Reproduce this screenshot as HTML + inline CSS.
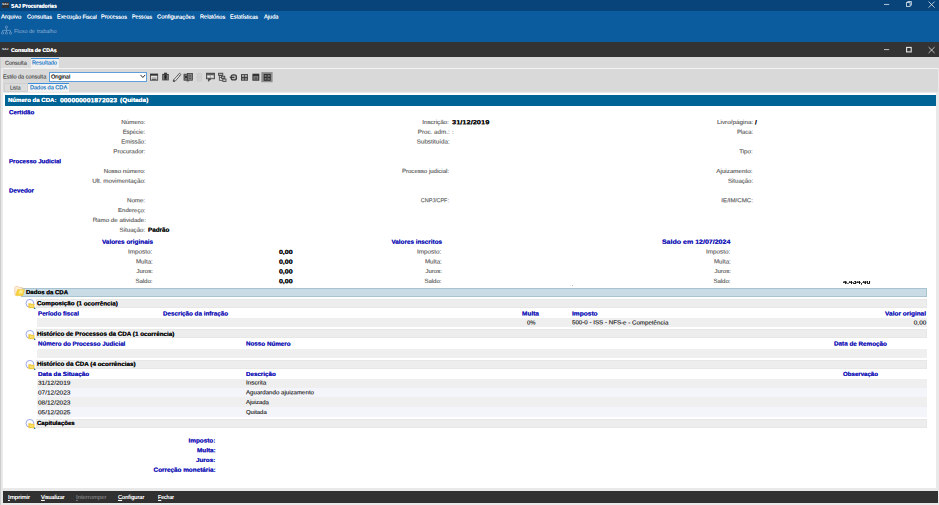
<!DOCTYPE html>
<html><head><meta charset="utf-8"><title>SAJ Procuradorias</title>
<style>
html,body{margin:0;padding:0;}
body{width:939px;height:505px;overflow:hidden;background:#fff;font-family:"Liberation Sans",sans-serif;}
#root{position:relative;width:939px;height:505px;overflow:hidden;background:#fff;}
.b{position:absolute;}
.t{text-shadow:0 0 0.35px currentColor;position:absolute;white-space:nowrap;line-height:8px;height:8px;font-size:5.8px;color:#6a6a6a;}
.t u{text-decoration:underline;text-decoration-thickness:0.5px;text-underline-offset:0.6px;}
.w{color:#fff;text-shadow:0 0 0.15px currentColor;}
.wb{color:#fff;font-weight:bold;}
.fl{color:#8db0d3;text-shadow:none;}
.tg{color:#5c5c5c;text-shadow:0 0 0.15px currentColor;}
.tb{color:#2f7fc8;text-shadow:0 0 0.15px currentColor;}
.k{color:#222;}
.kb{color:#111;font-weight:bold;text-shadow:0 0 0.25px currentColor;}
.sb{color:#2222b8;font-weight:bold;text-shadow:0 0 0.25px currentColor;}
.g{color:#767676;text-shadow:0 0 0.2px currentColor;}
.d{color:#444;}
.dis{color:#777;}

</style></head>
<body>
<div id="root">
<!-- chrome -->
<div class="b" style="left:0;top:0;width:939px;height:11.4px;background:#08437a"></div>
<div class="b" style="left:0;top:11.4px;width:939px;height:30.5px;background:#0b5b9f"></div>
<div class="b" style="left:0;top:41.9px;width:939px;height:15.1px;background:#333"></div>
<!-- tab strip -->
<div class="b" style="left:0;top:57px;width:939px;height:448px;background:#e9e9e9"></div>
<div class="b" style="left:0;top:57px;width:939px;height:10.7px;background:#dadada"></div>
<div class="b" style="left:30.7px;top:57.6px;width:28.7px;height:10px;background:#efefef;border-top:0.8px solid #3d8edb;box-sizing:border-box"></div>
<div class="b" style="left:2.5px;top:67.6px;width:935px;height:1.1px;background:#f4f4f4"></div>
<!-- toolbar panel -->
<div class="b" style="left:2.5px;top:68.7px;width:935px;height:23.8px;background:#d9d9d9"></div>
<div class="b" style="left:49.1px;top:72.2px;width:98.2px;height:10px;background:#fff;border:0.8px solid #5fa0dc;box-sizing:border-box"></div>
<!-- subtabs -->
<div class="b" style="left:3.5px;top:83.2px;width:24.2px;height:8.6px;background:#dcdcdc;border:0.5px solid #cfcfcf;box-sizing:border-box"></div>
<div class="b" style="left:28.4px;top:82.8px;width:40.6px;height:9.6px;background:#f2f2f2;border-top:0.8px solid #3d8edb;box-sizing:border-box"></div>
<!-- content white -->
<div class="b" style="left:3px;top:92.5px;width:933.4px;height:395.7px;background:#fff"></div>
<div class="b" style="left:5px;top:94.5px;width:931.3px;height:11.1px;background:#006396"></div>
<!-- tree bars -->
<div class="b" style="left:21px;top:287.7px;width:906.2px;height:8.9px;background:#c9dce6;border:0.5px solid #aac3d0;box-sizing:border-box"></div>
<div class="b" style="left:35.8px;top:298.9px;width:891.4px;height:8.9px;background:#ededed;box-shadow:inset 0 0 0 0.5px #e2e2e2"></div>
<div class="b" style="left:36.5px;top:318.2px;width:890.7px;height:9px;background:#efefef"></div>
<div class="b" style="left:35.8px;top:329.4px;width:891.4px;height:8.8px;background:#ededed;box-shadow:inset 0 0 0 0.5px #e2e2e2"></div>
<div class="b" style="left:36.5px;top:348.6px;width:890.7px;height:9px;background:#efefef"></div>
<div class="b" style="left:35.8px;top:360px;width:891.4px;height:8.7px;background:#ededed;box-shadow:inset 0 0 0 0.5px #e2e2e2"></div>
<div class="b" style="left:36.5px;top:378.6px;width:890.7px;height:9px;background:#efefef"></div>
<div class="b" style="left:36.5px;top:387.6px;width:890.7px;height:9.7px;background:#f4f5fb"></div>
<div class="b" style="left:36.5px;top:397.3px;width:890.7px;height:10px;background:#efefef"></div>
<div class="b" style="left:36.5px;top:407.3px;width:890.7px;height:10px;background:#f4f5fb"></div>
<div class="b" style="left:35.8px;top:419px;width:891.4px;height:8.6px;background:#ededed;box-shadow:inset 0 0 0 0.5px #e2e2e2"></div>
<!-- bottom -->
<div class="b" style="left:3px;top:490.8px;width:935px;height:11.8px;background:#313131"></div>

<div class="b" style="left:0;top:57px;width:0.9px;height:448px;background:#cdcdcd"></div>
<!-- clipped partial value -->
<div class="b" style="left:840px;top:281.4px;width:36px;height:4px;overflow:hidden"><span class="t kb" style="left:3.2px;top:-3.6px;font-size:6px;transform-origin:0 50%;transform:scaleX(1.17)">4.434,40</span></div>
<div class="b" style="left:572.2px;top:284.6px;width:0.8px;height:0.8px;background:#999;border-radius:50%"></div>

<!-- window controls row 1 -->
<svg class="b" style="left:880px;top:0;width:59px;height:11px" viewBox="880 0 59 11">
 <g stroke="#fff" fill="none" stroke-width="0.8" opacity="0.88">
  <line x1="884" y1="4.45" x2="889.2" y2="4.45"/>
  <rect x="906.4" y="2.6" width="3.7" height="3.8"/>
  <path d="M907.7 2.6V1.5H911.4V5.2H910.1"/>
  <path d="M928.6 1.6L934.6 7.6M934.6 1.6L928.6 7.6"/>
 </g>
</svg>
<!-- window controls row 2 -->
<svg class="b" style="left:880px;top:44px;width:59px;height:12px" viewBox="880 44 59 12">
 <g stroke="#fff" fill="none" stroke-width="0.8" opacity="0.88">
  <line x1="884" y1="49.6" x2="889.2" y2="49.6"/>
  <rect x="906.6" y="47.4" width="4.6" height="4.5" stroke-width="1.1"/>
  <path d="M928.6 47.1L934.6 53M934.6 47.1L928.6 53"/>
 </g>
</svg>
<!-- SAJ icons -->
<div class="b" style="left:1.7px;top:1.6px;width:6.9px;height:6.5px;background:#2f3338"></div>
<span class="t" style="left:2.3px;top:2.1px;font-size:2.9px;line-height:4px;height:4px;color:#f2f2f2;font-weight:bold;text-shadow:none;transform-origin:0 50%;transform:scaleX(1.12) rotate(0.1deg)">SAJ</span>
<span class="t" style="left:2.2px;top:46.8px;font-size:2.9px;line-height:4px;height:4px;color:#f2f2f2;font-weight:bold;text-shadow:none;transform-origin:0 50%;transform:scaleX(1.15) rotate(0.1deg)">SAJ</span>
<!-- fluxo icon -->
<svg class="b" style="left:1px;top:25px;width:12px;height:11px" viewBox="1 25 12 11">
 <g stroke="#8db0d3" fill="none" stroke-width="0.6">
  <circle cx="6.4" cy="27.1" r="1.1"/>
  <path d="M6.4 28.2V32M2.6 32V30.4H10.5V32"/>
  <circle cx="2.6" cy="33.1" r="1.1"/><circle cx="6.4" cy="33.1" r="1.1"/><circle cx="10.5" cy="33.1" r="1.1"/>
 </g>
</svg>
<!-- combo chevron -->
<svg class="b" style="left:139px;top:73px;width:8px;height:8px" viewBox="139 73 8 8">
 <path d="M140.5 74.9L142.85 77.5L145.2 74.9" stroke="#222" stroke-width="0.95" fill="none"/>
</svg>
<!-- toolbar icons -->
<svg class="b" style="left:148px;top:71px;width:127px;height:13px;filter:blur(0.25px)" viewBox="148 71 127 13">
 <!-- 1 window -->
 <g>
  <rect x="150.5" y="74" width="7.2" height="6.2" fill="#e4e4e4" stroke="#333" stroke-width="0.8"/>
  <rect x="150.5" y="74" width="7.2" height="1.7" fill="#333"/>
  <rect x="151.7" y="77" width="4.8" height="1.6" fill="#b8b8b8"/>
  <rect x="151.7" y="78.8" width="4.8" height="1" fill="#444"/>
 </g>
 <!-- 2 clipboard -->
 <g>
  <rect x="162.2" y="73.9" width="6.6" height="6.5" fill="#424242"/>
  <rect x="164" y="72.7" width="3" height="1.8" fill="#3a3a3a"/>
  <rect x="163.1" y="75" width="1.1" height="4.6" fill="#7d7d7d"/>
  <rect x="166.8" y="75" width="1.1" height="4.6" fill="#7d7d7d"/>
  <ellipse cx="165.5" cy="77" rx="0.7" ry="1.8" fill="#141414"/>
 </g>
 <!-- 3 pencil -->
 <g>
  <path d="M173.4 80.2L179.6 73.2L181 74.5L175 81.4Z" fill="#e8e8e8" stroke="#3c3c3c" stroke-width="0.8"/>
  <path d="M173 81.6L173.5 79.9L175 81.2Z" fill="#333" stroke="#333" stroke-width="0.4"/>
  <path d="M178.4 74.6L179.8 75.9" stroke="#3c3c3c" stroke-width="0.6"/>
 </g>
 <!-- 4 -->
 <g>
  <rect x="184" y="74.2" width="5" height="6" fill="#7a7a7a" stroke="#3e3e3e" stroke-width="0.8"/>
  <rect x="187.4" y="73.4" width="5" height="6.8" fill="#8c8c8c" stroke="#3e3e3e" stroke-width="0.8"/>
  <path d="M184.8 75.8L187 78.2M187 75.8L184.8 78.2" stroke="#1c1c1c" stroke-width="0.8"/>
  <rect x="188.4" y="74.8" width="3" height="0.8" fill="#4a4a4a"/><rect x="188.4" y="76.5" width="3" height="0.8" fill="#4a4a4a"/><rect x="188.4" y="78.2" width="3" height="0.8" fill="#4a4a4a"/>
  <rect x="186.6" y="80.2" width="2" height="1.3" fill="#555"/>
 </g>
 <!-- 5 disabled -->
 <g stroke="#c4c4c4" fill="#d2d2d2" stroke-width="0.5">
  <rect x="197.1" y="73.4" width="4.4" height="3.6"/><rect x="197.1" y="77.4" width="4.4" height="3.6"/>
 </g>
 <!-- 6 comment -->
 <g>
  <rect x="206.5" y="73.2" width="8" height="5.6" fill="#a8a8a8" stroke="#3c3c3c" stroke-width="0.8"/>
  <rect x="206.5" y="73.2" width="8" height="1.6" fill="#4a4a4a"/>
  <rect x="207.6" y="75.8" width="2.2" height="1.6" fill="#ededed"/><rect x="211" y="75.8" width="2.4" height="1.6" fill="#ededed"/>
  <path d="M208.4 78.8V81.4L211 78.8Z" fill="#3c3c3c" stroke="#3c3c3c" stroke-width="0.5"/>
 </g>
 <!-- 7 tree -->
 <g stroke="#3a3a3a" stroke-width="0.8" fill="#a8a8a8">
  <rect x="218.6" y="73.2" width="4.2" height="2.3"/>
  <path d="M219.4 75.5V80.4H222.8M219.4 77.4H221.6" fill="none"/>
  <rect x="221.6" y="76.2" width="3.2" height="2.2"/>
  <rect x="222.8" y="79" width="3.2" height="2.4" fill="#c8c8c8"/>
 </g>
 <!-- 8 link -->
 <g fill="none" stroke="#3c3c3c">
  <rect x="231.2" y="74.9" width="5.2" height="5" rx="2" fill="#bdbdbd" stroke-width="1.3"/>
  <path d="M229.8 77.4H234.4" stroke-width="1.2"/>
 </g>
 <!-- 9 -->
 <g>
  <rect x="241" y="74.1" width="7" height="6.6" fill="#424242"/>
  <rect x="242" y="75.2" width="2.2" height="1.5" fill="#c8c8c8"/><rect x="245" y="75.2" width="2.2" height="1.5" fill="#c8c8c8"/>
  <rect x="242" y="78.3" width="2.2" height="1.4" fill="#a0a0a0"/><rect x="245" y="78.3" width="2.2" height="1.4" fill="#a0a0a0"/>
 </g>
 <!-- 10 -->
 <g>
  <rect x="252.4" y="73.7" width="6.9" height="7" fill="#343434"/>
  <rect x="253.5" y="76.2" width="4.7" height="3.5" fill="#8a8a8a"/>
  <rect x="254.6" y="77.2" width="2.6" height="2.5" fill="#555"/>
 </g>
 <!-- 11 selected -->
 <g>
  <rect x="261.3" y="72.1" width="11.3" height="10.1" fill="#8e8e8e"/>
  <rect x="263.7" y="73.9" width="7" height="6.9" fill="#2e2e2e"/>
  <rect x="264.7" y="75.1" width="1.7" height="1.6" fill="#8e8e8e"/><rect x="268" y="75.1" width="1.7" height="1.6" fill="#8e8e8e"/>
  <rect x="264.7" y="78.1" width="1.7" height="1.6" fill="#808080"/><rect x="268" y="78.1" width="1.7" height="1.6" fill="#808080"/>
  <rect x="266.8" y="74.4" width="0.8" height="6" fill="#606060"/>
 </g>
</svg>
<!-- folder icon -->
<svg class="b" style="left:13px;top:285px;width:13px;height:12px;filter:blur(0.25px)" viewBox="13 285 13 12">
 <path d="M14.8 287.4L15.6 286.5H18.2L19 287.6H22.4V294.6H14.8Z" fill="#fdf1dc" stroke="#f0b78c" stroke-width="0.6"/>
 <path d="M17.4 289.4H24.6L23 295.7H15.6Z" fill="#f5d23e" stroke="#ecc040" stroke-width="0.4"/>
 <path d="M19.6 290.2H23L22.2 293.6H18.8Z" fill="#fdf2a8" opacity="0.85"/>
</svg>

<svg class="b" style="left:24px;top:297.0px;width:13px;height:13px" viewBox="24 297 13 13">
 <circle cx="29.9" cy="303.3" r="3.9" fill="#fdfdff" stroke="#9ca8ea" stroke-width="1"/>
 <path d="M28.6 303.4H30.6L31.2 304H34.2V307.9H28.6Z" fill="#f4cf3c" stroke="#e9b848" stroke-width="0.4"/>
 <path d="M29.6 304.8H33.4V306.8H29.6Z" fill="#fbe98a" opacity="0.7"/>
 <circle cx="34.7" cy="308.3" r="0.8" fill="#176a7a"/>
</svg>
<svg class="b" style="left:24px;top:327.5px;width:13px;height:13px" viewBox="24 297 13 13">
 <circle cx="29.9" cy="303.3" r="3.9" fill="#fdfdff" stroke="#9ca8ea" stroke-width="1"/>
 <path d="M28.6 303.4H30.6L31.2 304H34.2V307.9H28.6Z" fill="#f4cf3c" stroke="#e9b848" stroke-width="0.4"/>
 <path d="M29.6 304.8H33.4V306.8H29.6Z" fill="#fbe98a" opacity="0.7"/>
 <circle cx="34.7" cy="308.3" r="0.8" fill="#176a7a"/>
</svg>
<svg class="b" style="left:24px;top:357.8px;width:13px;height:13px" viewBox="24 297 13 13">
 <circle cx="29.9" cy="303.3" r="3.9" fill="#fdfdff" stroke="#9ca8ea" stroke-width="1"/>
 <path d="M28.6 303.4H30.6L31.2 304H34.2V307.9H28.6Z" fill="#f4cf3c" stroke="#e9b848" stroke-width="0.4"/>
 <path d="M29.6 304.8H33.4V306.8H29.6Z" fill="#fbe98a" opacity="0.7"/>
 <circle cx="34.7" cy="308.3" r="0.8" fill="#176a7a"/>
</svg>
<svg class="b" style="left:24px;top:416.9px;width:13px;height:13px" viewBox="24 297 13 13">
 <circle cx="29.9" cy="303.3" r="3.9" fill="#fdfdff" stroke="#9ca8ea" stroke-width="1"/>
 <path d="M28.6 303.4H30.6L31.2 304H34.2V307.9H28.6Z" fill="#f4cf3c" stroke="#e9b848" stroke-width="0.4"/>
 <path d="M29.6 304.8H33.4V306.8H29.6Z" fill="#fbe98a" opacity="0.7"/>
 <circle cx="34.7" cy="308.3" r="0.8" fill="#176a7a"/>
</svg>
<span id="t0" class="t wb" style="top:1px;font-size:5.5px;left:11.00px;transform-origin:0 50%;transform:translateY(0.70px) scaleX(0.923) rotate(0.1deg);">SAJ Procuradorias</span>
<span id="t1" class="t w" style="top:12px;font-size:5.7px;left:0.80px;transform-origin:0 50%;transform:translateY(0.60px) scaleX(1.047) rotate(0.1deg);">Arquivo</span>
<span id="t2" class="t w" style="top:12px;font-size:5.7px;left:26.60px;transform-origin:0 50%;transform:translateY(0.60px) scaleX(0.988) rotate(0.1deg);">Consultas</span>
<span id="t3" class="t w" style="top:12px;font-size:5.7px;left:56.70px;transform-origin:0 50%;transform:translateY(0.60px) scaleX(0.958) rotate(0.1deg);">Execução Fiscal</span>
<span id="t4" class="t w" style="top:12px;font-size:5.7px;left:101.00px;transform-origin:0 50%;transform:translateY(0.60px) scaleX(0.979) rotate(0.1deg);">Processos</span>
<span id="t5" class="t w" style="top:12px;font-size:5.7px;left:131.60px;transform-origin:0 50%;transform:translateY(0.60px) scaleX(0.925) rotate(0.1deg);">Pessoas</span>
<span id="t6" class="t w" style="top:12px;font-size:5.7px;left:156.90px;transform-origin:0 50%;transform:translateY(0.60px) scaleX(1.025) rotate(0.1deg);">Configurações</span>
<span id="t7" class="t w" style="top:12px;font-size:5.7px;left:199.60px;transform-origin:0 50%;transform:translateY(0.60px) scaleX(0.988) rotate(0.1deg);">Relatórios</span>
<span id="t8" class="t w" style="top:12px;font-size:5.7px;left:230.20px;transform-origin:0 50%;transform:translateY(0.60px) scaleX(0.966) rotate(0.1deg);">Estatísticas</span>
<span id="t9" class="t w" style="top:12px;font-size:5.7px;left:263.80px;transform-origin:0 50%;transform:translateY(0.60px) scaleX(0.997) rotate(0.1deg);">Ajuda</span>
<span id="t10" class="t fl" style="top:26px;font-size:5.7px;left:14.00px;transform-origin:0 50%;transform:translateY(0.90px) scaleX(0.971) rotate(0.1deg);">Fluxo de trabalho</span>
<span id="t11" class="t wb" style="top:46px;font-size:5.5px;left:11.00px;transform-origin:0 50%;transform:translateY(0.05px) scaleX(0.952) rotate(0.1deg);">Consulta de CDAs</span>
<span id="t12" class="t tg" style="top:58px;font-size:5.7px;left:4.90px;transform-origin:0 50%;transform:translateY(0.70px) scaleX(0.966) rotate(0.1deg);">Consulta</span>
<span id="t13" class="t tb" style="top:58px;font-size:5.7px;left:32.20px;transform-origin:0 50%;transform:translateY(0.40px) scaleX(0.972) rotate(0.1deg);">Resultado</span>
<span id="t14" class="t tg" style="top:72px;font-size:5.7px;left:2.80px;transform-origin:0 50%;transform:translateY(0.50px) scaleX(0.969) rotate(0.1deg);">Estilo da consulta</span>
<span id="t15" class="t k" style="top:72px;font-size:5.7px;left:50.70px;transform-origin:0 50%;transform:translateY(0.50px) scaleX(0.979) rotate(0.1deg);">Original</span>
<span id="t16" class="t tg" style="top:83px;font-size:5.7px;left:10.00px;transform-origin:0 50%;transform:translateY(0.50px) scaleX(0.866) rotate(0.1deg);">Lista</span>
<span id="t17" class="t tb" style="top:83px;font-size:5.7px;left:30.00px;transform-origin:0 50%;transform:translateY(0.20px) scaleX(0.978) rotate(0.1deg);">Dados da CDA</span>
<span id="t18" class="t wb" style="top:95px;font-size:6.0px;left:7.70px;transform-origin:0 50%;transform:translateY(0.90px) scaleX(1.010) rotate(0.1deg);">Número da CDA:</span>
<span id="t19" class="t wb" style="top:96px;font-size:6.0px;left:59.60px;transform-origin:0 50%;transform:translateY(0.20px) scaleX(1.141) rotate(0.1deg);">000000001872023</span>
<span id="t20" class="t wb" style="top:95px;font-size:6.0px;left:119.60px;transform-origin:0 50%;transform:translateY(0.90px) scaleX(1.074) rotate(0.1deg);">(Quitada)</span>
<span id="t21" class="t sb" style="top:108px;font-size:6.0px;left:8.50px;transform-origin:0 50%;transform:translateY(0.15px) scaleX(1.035) rotate(0.1deg);">Certidão</span>
<span id="t22" class="t g" style="top:117px;font-size:5.8px;right:793.50px;transform-origin:100% 50%;transform:translateY(0.95px) scaleX(1.075) rotate(0.1deg);">Número:</span>
<span id="t23" class="t g" style="top:127px;font-size:5.8px;right:793.50px;transform-origin:100% 50%;transform:translateY(0.75px) scaleX(1.016) rotate(0.1deg);">Espécie:</span>
<span id="t24" class="t g" style="top:137px;font-size:5.8px;right:793.50px;transform-origin:100% 50%;transform:translateY(0.55px) scaleX(1.028) rotate(0.1deg);">Emissão:</span>
<span id="t25" class="t g" style="top:147px;font-size:5.8px;right:793.50px;transform-origin:100% 50%;transform:translateY(0.35px) scaleX(1.056) rotate(0.1deg);">Procurador:</span>
<span id="t26" class="t sb" style="top:157px;font-size:6.0px;left:8.50px;transform-origin:0 50%;transform:translateY(0.15px) scaleX(1.019) rotate(0.1deg);">Processo Judicial</span>
<span id="t27" class="t g" style="top:166px;font-size:5.8px;right:793.50px;transform-origin:100% 50%;transform:translateY(0.95px) scaleX(1.058) rotate(0.1deg);">Nosso número:</span>
<span id="t28" class="t g" style="top:176px;font-size:5.8px;right:793.50px;transform-origin:100% 50%;transform:translateY(0.75px) scaleX(1.078) rotate(0.1deg);">Ult. movimentação:</span>
<span id="t29" class="t sb" style="top:186px;font-size:6.0px;left:8.50px;transform-origin:0 50%;transform:translateY(0.55px) scaleX(1.041) rotate(0.1deg);">Devedor</span>
<span id="t30" class="t g" style="top:196px;font-size:5.8px;right:793.50px;transform-origin:100% 50%;transform:translateY(0.35px) scaleX(1.060) rotate(0.1deg);">Nome:</span>
<span id="t31" class="t g" style="top:206px;font-size:5.8px;right:793.50px;transform-origin:100% 50%;transform:translateY(0.15px) scaleX(1.033) rotate(0.1deg);">Endereço:</span>
<span id="t32" class="t g" style="top:215px;font-size:5.8px;right:793.50px;transform-origin:100% 50%;transform:translateY(0.95px) scaleX(1.067) rotate(0.1deg);">Ramo de atividade:</span>
<span id="t33" class="t g" style="top:225px;font-size:5.8px;right:793.50px;transform-origin:100% 50%;transform:translateY(0.75px) scaleX(1.059) rotate(0.1deg);">Situação:</span>
<span id="t34" class="t kb" style="top:225px;font-size:6.0px;left:147.60px;transform-origin:0 50%;transform:translateY(0.75px) scaleX(1.047) rotate(0.1deg);">Padrão</span>
<span id="t35" class="t g" style="top:117px;font-size:5.8px;right:489.80px;transform-origin:100% 50%;transform:translateY(0.95px) scaleX(1.072) rotate(0.1deg);">Inscrição:</span>
<span id="t36" class="t kb" style="top:118px;font-size:6.0px;left:452.00px;transform-origin:0 50%;transform:translateY(0.25px) scaleX(1.242) rotate(0.1deg);">31/12/2019</span>
<span id="t37" class="t g" style="top:127px;font-size:5.8px;right:489.80px;transform-origin:100% 50%;transform:translateY(0.75px) scaleX(1.076) rotate(0.1deg);">Proc. adm.:</span>
<span id="t38" class="t g" style="top:128px;font-size:5.8px;left:452.20px;transform-origin:0 50%;transform:translateY(0.05px) scaleX(1.055) rotate(0.1deg);">:</span>
<span id="t39" class="t g" style="top:137px;font-size:5.8px;right:489.80px;transform-origin:100% 50%;transform:translateY(0.55px) scaleX(1.071) rotate(0.1deg);">Substituída:</span>
<span id="t40" class="t g" style="top:166px;font-size:5.8px;right:489.80px;transform-origin:100% 50%;transform:translateY(0.95px) scaleX(1.046) rotate(0.1deg);">Processo judicial:</span>
<span id="t41" class="t g" style="top:196px;font-size:5.8px;right:489.80px;transform-origin:100% 50%;transform:translateY(0.35px) scaleX(0.938) rotate(0.1deg);">CNPJ/CPF:</span>
<span id="t42" class="t g" style="top:117px;font-size:5.8px;right:186.10px;transform-origin:100% 50%;transform:translateY(0.95px) scaleX(1.090) rotate(0.1deg);">Livro/página:</span>
<span id="t43" class="t kb" style="top:118px;font-size:6.0px;left:755.40px;transform-origin:0 50%;transform:translateY(0.25px) scaleX(1.068) rotate(0.1deg);">/</span>
<span id="t44" class="t g" style="top:127px;font-size:5.8px;right:186.10px;transform-origin:100% 50%;transform:translateY(0.75px) scaleX(1.005) rotate(0.1deg);">Placa:</span>
<span id="t45" class="t g" style="top:147px;font-size:5.8px;right:186.10px;transform-origin:100% 50%;transform:translateY(0.35px) scaleX(1.064) rotate(0.1deg);">Tipo:</span>
<span id="t46" class="t g" style="top:166px;font-size:5.8px;right:186.10px;transform-origin:100% 50%;transform:translateY(0.95px) scaleX(1.080) rotate(0.1deg);">Ajuizamento:</span>
<span id="t47" class="t g" style="top:176px;font-size:5.8px;right:186.10px;transform-origin:100% 50%;transform:translateY(0.75px) scaleX(1.043) rotate(0.1deg);">Situação:</span>
<span id="t48" class="t g" style="top:196px;font-size:5.8px;right:186.10px;transform-origin:100% 50%;transform:translateY(0.35px) scaleX(1.055) rotate(0.1deg);">IE/IM/CMC:</span>
<span id="t49" class="t sb" style="top:237px;font-size:6.0px;right:786.10px;transform-origin:100% 50%;transform:translateY(0.80px) scaleX(1.064) rotate(0.1deg);">Valores originais</span>
<span id="t50" class="t g" style="top:247px;font-size:5.8px;right:786.60px;transform-origin:100% 50%;transform:translateY(0.60px) scaleX(1.093) rotate(0.1deg);">Imposto:</span>
<span id="t51" class="t g" style="top:257px;font-size:5.8px;right:786.60px;transform-origin:100% 50%;transform:translateY(0.40px) scaleX(1.064) rotate(0.1deg);">Multa:</span>
<span id="t52" class="t g" style="top:267px;font-size:5.8px;right:786.60px;transform-origin:100% 50%;transform:translateY(0.10px) scaleX(1.026) rotate(0.1deg);">Juros:</span>
<span id="t53" class="t g" style="top:276px;font-size:5.8px;right:786.60px;transform-origin:100% 50%;transform:translateY(0.90px) scaleX(1.034) rotate(0.1deg);">Saldo:</span>
<span id="t54" class="t sb" style="top:237px;font-size:6.0px;right:497.10px;transform-origin:100% 50%;transform:translateY(0.80px) scaleX(1.053) rotate(0.1deg);">Valores inscritos</span>
<span id="t55" class="t g" style="top:247px;font-size:5.8px;right:497.60px;transform-origin:100% 50%;transform:translateY(0.60px) scaleX(1.093) rotate(0.1deg);">Imposto:</span>
<span id="t56" class="t g" style="top:257px;font-size:5.8px;right:497.60px;transform-origin:100% 50%;transform:translateY(0.40px) scaleX(1.064) rotate(0.1deg);">Multa:</span>
<span id="t57" class="t g" style="top:267px;font-size:5.8px;right:497.60px;transform-origin:100% 50%;transform:translateY(0.10px) scaleX(1.026) rotate(0.1deg);">Juros:</span>
<span id="t58" class="t g" style="top:276px;font-size:5.8px;right:497.60px;transform-origin:100% 50%;transform:translateY(0.90px) scaleX(1.034) rotate(0.1deg);">Saldo:</span>
<span id="t59" class="t sb" style="top:237px;font-size:6.0px;right:208.20px;transform-origin:100% 50%;transform:translateY(0.80px) scaleX(1.173) rotate(0.1deg);">Saldo em 12/07/2024</span>
<span id="t60" class="t g" style="top:247px;font-size:5.8px;right:208.70px;transform-origin:100% 50%;transform:translateY(0.60px) scaleX(1.093) rotate(0.1deg);">Imposto:</span>
<span id="t61" class="t g" style="top:257px;font-size:5.8px;right:208.70px;transform-origin:100% 50%;transform:translateY(0.40px) scaleX(1.064) rotate(0.1deg);">Multa:</span>
<span id="t62" class="t g" style="top:267px;font-size:5.8px;right:208.70px;transform-origin:100% 50%;transform:translateY(0.10px) scaleX(1.026) rotate(0.1deg);">Juros:</span>
<span id="t63" class="t g" style="top:276px;font-size:5.8px;right:208.70px;transform-origin:100% 50%;transform:translateY(0.90px) scaleX(1.034) rotate(0.1deg);">Saldo:</span>
<span id="t64" class="t kb" style="top:247px;font-size:6.0px;right:646.00px;transform-origin:100% 50%;transform:translateY(0.90px) scaleX(1.181) rotate(0.1deg);">0,00</span>
<span id="t65" class="t kb" style="top:257px;font-size:6.0px;right:646.00px;transform-origin:100% 50%;transform:translateY(0.70px) scaleX(1.181) rotate(0.1deg);">0,00</span>
<span id="t66" class="t kb" style="top:267px;font-size:6.0px;right:646.00px;transform-origin:100% 50%;transform:translateY(0.40px) scaleX(1.181) rotate(0.1deg);">0,00</span>
<span id="t67" class="t kb" style="top:277px;font-size:6.0px;right:646.00px;transform-origin:100% 50%;transform:translateY(0.20px) scaleX(1.181) rotate(0.1deg);">0,00</span>
<span id="t68" class="t kb" style="top:288px;font-size:6.0px;left:25.60px;transform-origin:0 50%;transform:translateY(0.10px) scaleX(1.010) rotate(0.1deg);">Dados da CDA</span>
<span id="t69" class="t kb" style="top:299px;font-size:6.0px;left:37.30px;transform-origin:0 50%;transform:translateY(0.30px) scaleX(1.046) rotate(0.1deg);">Composição (1 ocorrência)</span>
<span id="t70" class="t sb" style="top:309px;font-size:6.0px;left:37.90px;transform-origin:0 50%;transform:translateY(0.50px) scaleX(1.039) rotate(0.1deg);">Período fiscal</span>
<span id="t71" class="t sb" style="top:309px;font-size:6.0px;left:162.90px;transform-origin:0 50%;transform:translateY(0.50px) scaleX(1.042) rotate(0.1deg);">Descrição da infração</span>
<span id="t72" class="t sb" style="top:309px;font-size:6.0px;left:522.40px;transform-origin:0 50%;transform:translateY(0.50px) scaleX(1.085) rotate(0.1deg);">Multa</span>
<span id="t73" class="t sb" style="top:309px;font-size:6.0px;left:572.00px;transform-origin:0 50%;transform:translateY(0.50px) scaleX(1.097) rotate(0.1deg);">Imposto</span>
<span id="t74" class="t sb" style="top:309px;font-size:6.0px;right:12.60px;transform-origin:100% 50%;transform:translateY(0.50px) scaleX(1.076) rotate(0.1deg);">Valor original</span>
<span id="t75" class="t d" style="top:318px;font-size:5.8px;left:526.60px;transform-origin:0 50%;transform:translateY(0.60px) scaleX(1.013) rotate(0.1deg);">0%</span>
<span id="t76" class="t d" style="top:318px;font-size:5.8px;left:572.00px;transform-origin:0 50%;transform:translateY(0.30px) scaleX(1.064) rotate(0.1deg);">500-0 - ISS - NFS-e - Competência</span>
<span id="t77" class="t d" style="top:318px;font-size:5.8px;right:12.60px;transform-origin:100% 50%;transform:translateY(0.60px) scaleX(1.107) rotate(0.1deg);">0,00</span>
<span id="t78" class="t kb" style="top:329px;font-size:6.0px;left:37.30px;transform-origin:0 50%;transform:translateY(0.70px) scaleX(1.048) rotate(0.1deg);">Histórico de Processos da CDA (1 ocorrência)</span>
<span id="t79" class="t sb" style="top:339px;font-size:6.0px;left:37.90px;transform-origin:0 50%;transform:translateY(0.60px) scaleX(1.035) rotate(0.1deg);">Número do Processo Judicial</span>
<span id="t80" class="t sb" style="top:339px;font-size:6.0px;left:245.50px;transform-origin:0 50%;transform:translateY(0.60px) scaleX(1.045) rotate(0.1deg);">Nosso Número</span>
<span id="t81" class="t sb" style="top:339px;font-size:6.0px;left:834.00px;transform-origin:0 50%;transform:translateY(0.60px) scaleX(1.052) rotate(0.1deg);">Data de Remoção</span>
<span id="t82" class="t kb" style="top:359px;font-size:6.0px;left:37.30px;transform-origin:0 50%;transform:translateY(0.80px) scaleX(1.051) rotate(0.1deg);">Histórico da CDA (4 ocorrências)</span>
<span id="t83" class="t sb" style="top:370px;font-size:6.0px;left:37.90px;transform-origin:0 50%;transform:translateY(0.00px) scaleX(1.057) rotate(0.1deg);">Data da Situação</span>
<span id="t84" class="t sb" style="top:370px;font-size:6.0px;left:245.50px;transform-origin:0 50%;transform:translateY(0.00px) scaleX(1.035) rotate(0.1deg);">Descrição</span>
<span id="t85" class="t sb" style="top:370px;font-size:6.0px;left:843.00px;transform-origin:0 50%;transform:translateY(0.00px) scaleX(1.019) rotate(0.1deg);">Observação</span>
<span id="t86" class="t d" style="top:378px;font-size:5.8px;left:37.90px;transform-origin:0 50%;transform:translateY(0.70px) scaleX(1.117) rotate(0.1deg);">31/12/2019</span>
<span id="t87" class="t d" style="top:378px;font-size:5.8px;left:245.50px;transform-origin:0 50%;transform:translateY(0.40px) scaleX(1.086) rotate(0.1deg);">Inscrita</span>
<span id="t88" class="t d" style="top:388px;font-size:5.8px;left:37.90px;transform-origin:0 50%;transform:translateY(0.55px) scaleX(1.117) rotate(0.1deg);">07/12/2023</span>
<span id="t89" class="t d" style="top:388px;font-size:5.8px;left:245.50px;transform-origin:0 50%;transform:translateY(0.25px) scaleX(1.055) rotate(0.1deg);">Aguardando ajuizamento</span>
<span id="t90" class="t d" style="top:398px;font-size:5.8px;left:37.90px;transform-origin:0 50%;transform:translateY(0.40px) scaleX(1.117) rotate(0.1deg);">08/12/2023</span>
<span id="t91" class="t d" style="top:398px;font-size:5.8px;left:245.50px;transform-origin:0 50%;transform:translateY(0.10px) scaleX(1.025) rotate(0.1deg);">Ajuizada</span>
<span id="t92" class="t d" style="top:408px;font-size:5.8px;left:37.90px;transform-origin:0 50%;transform:translateY(0.25px) scaleX(1.117) rotate(0.1deg);">05/12/2025</span>
<span id="t93" class="t d" style="top:407px;font-size:5.8px;left:245.50px;transform-origin:0 50%;transform:translateY(0.95px) scaleX(1.019) rotate(0.1deg);">Quitada</span>
<span id="t94" class="t kb" style="top:418px;font-size:6.0px;left:37.30px;transform-origin:0 50%;transform:translateY(0.90px) scaleX(1.009) rotate(0.1deg);">Capitulações</span>
<span id="t95" class="t sb" style="top:436px;font-size:6.0px;right:723.50px;transform-origin:100% 50%;transform:translateY(0.60px) scaleX(1.057) rotate(0.1deg);">Imposto:</span>
<span id="t96" class="t sb" style="top:446px;font-size:6.0px;right:723.50px;transform-origin:100% 50%;transform:translateY(0.35px) scaleX(1.057) rotate(0.1deg);">Multa:</span>
<span id="t97" class="t sb" style="top:456px;font-size:6.0px;right:723.50px;transform-origin:100% 50%;transform:translateY(0.10px) scaleX(1.057) rotate(0.1deg);">Juros:</span>
<span id="t98" class="t sb" style="top:465px;font-size:6.0px;right:723.50px;transform-origin:100% 50%;transform:translateY(0.85px) scaleX(1.058) rotate(0.1deg);">Correção monetária:</span>
<span id="t99" class="t w ul" style="top:492px;font-size:5.8px;left:8.20px;transform-origin:0 50%;transform:translateY(0.90px) scaleX(1.050) rotate(0.1deg);"><u>I</u>mprimir</span>
<span id="t100" class="t w ul" style="top:492px;font-size:5.8px;left:40.90px;transform-origin:0 50%;transform:translateY(0.90px) scaleX(0.939) rotate(0.1deg);"><u>V</u>isualizar</span>
<span id="t101" class="t dis ul" style="top:492px;font-size:5.8px;left:76.20px;transform-origin:0 50%;transform:translateY(0.90px) scaleX(1.014) rotate(0.1deg);"><u>I</u>nterromper</span>
<span id="t102" class="t w ul" style="top:492px;font-size:5.8px;left:118.10px;transform-origin:0 50%;transform:translateY(0.90px) scaleX(0.971) rotate(0.1deg);"><u>C</u>onfigurar</span>
<span id="t103" class="t w ul" style="top:492px;font-size:5.8px;left:157.70px;transform-origin:0 50%;transform:translateY(0.90px) scaleX(0.891) rotate(0.1deg);"><u>F</u>echar</span>
</div>
</body></html>
